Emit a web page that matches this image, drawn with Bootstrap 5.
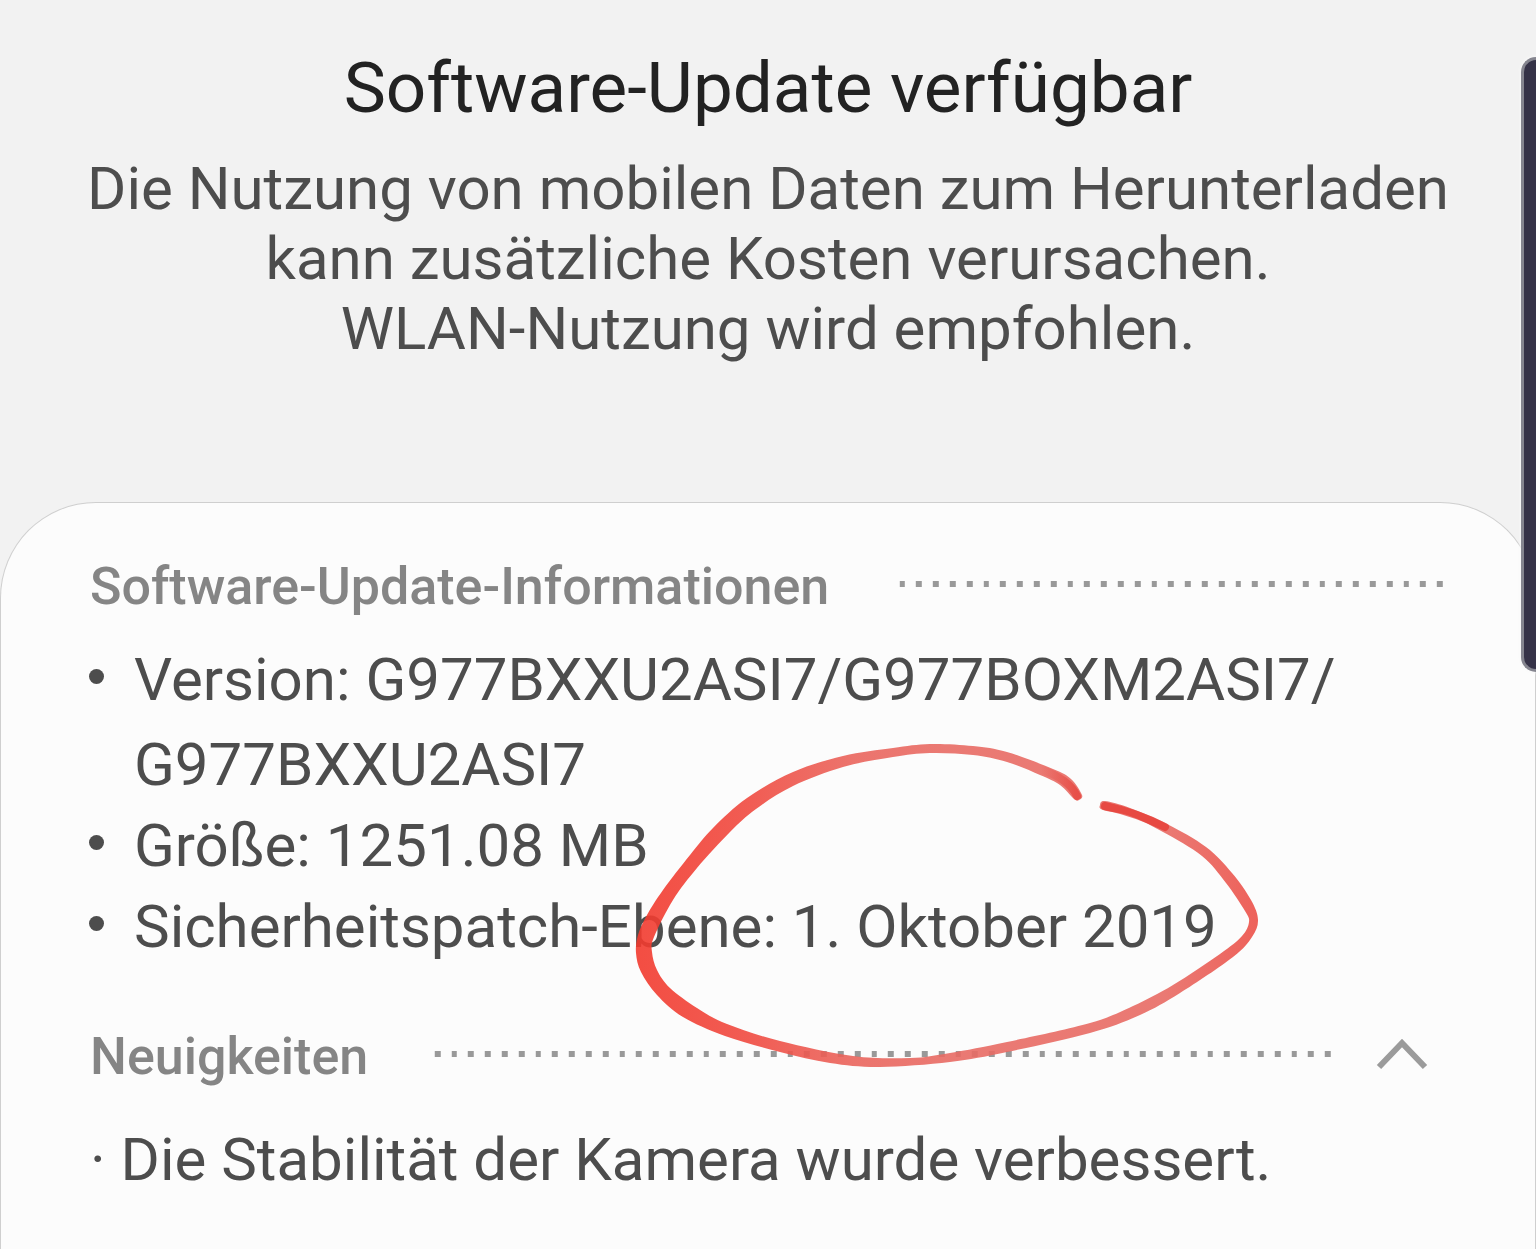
<!DOCTYPE html>
<html lang="de">
<head>
<meta charset="utf-8">
<meta name="viewport" content="width=device-width, initial-scale=1">
<title>Software-Update</title>
<link href="https://cdn.jsdelivr.net/npm/bootstrap@5.3.0/dist/css/bootstrap.min.css" rel="stylesheet">
<style>
  body { background: #f2f2f2; color: #4d4d4d; font-family: Roboto, "Liberation Sans", sans-serif; font-size: 60px; line-height: 70px; }
  .update-head { padding: 46px 80px 138px; }
  .update-title { color: #222; font-size: 71px; line-height: 84px; font-weight: 400; margin-bottom: 24px; }
  .info-sheet { background: #fcfcfc; border: 1px solid #cfcfcf; border-bottom: 0; border-radius: 96px 96px 0 0; padding: 54px 92px 0 89px; }
  .section-title { color: #858585; font-size: 52px; line-height: 60px; font-weight: 500; }
  .dotted-rule { height: 6px; margin: 0 0 6px 64px; background: repeating-linear-gradient(90deg, transparent 0 13%, #999 13% 20%) right top / 84px 6px repeat-x; }
  .info-list { margin: 20px 0 58px; line-height: 85px; }
  .info-list li { position: relative; padding-left: 44px; }
  .info-list li + li { margin-top: -4px; }
  .info-list li::before { content: ""; position: absolute; left: -1px; top: 32px; width: 15px; height: 15px; border-radius: 50%; background: #4d4d4d; }
  .collapse-btn { width: 52px; height: 60px; margin: 0 15px 0 45px; }
  .news-text { margin: 38px 0 60px; }
  .edge-handle { top: 57px; right: 0; width: 15px; height: 615px; background: #353247; border: 3px solid #85858f; border-right: 0; border-radius: 18px 0 0 18px; box-shadow: 0 0 3px 1px #f8f8f8; }
  .ink-circle { left: 629px; top: 237px; pointer-events: none; }
</style>
<script src="https://cdn.jsdelivr.net/npm/bootstrap@5.3.0/dist/js/bootstrap.bundle.min.js"></script>
</head>
<body class="position-relative min-vh-100 d-flex flex-column overflow-x-hidden">
<header class="update-head text-center">
  <h1 class="update-title">Software-Update verfügbar</h1>
  <p class="mb-0">Die Nutzung von mobilen Daten zum Herunterladen<br>kann zusätzliche Kosten verursachen.<br>WLAN-Nutzung wird empfohlen.</p>
</header>

<main class="info-sheet position-relative flex-grow-1">
  <div class="d-flex align-items-center">
    <h2 class="section-title mb-0">Software-Update-Informationen</h2>
    <div class="dotted-rule flex-grow-1"></div>
  </div>
  <ul class="info-list list-unstyled">
    <li>Version: G977BXXU2ASI7/G977BOXM2ASI7/<wbr>G977BXXU2ASI7</li>
    <li>Größe: 1251.08 MB</li>
    <li>Sicherheitspatch-Ebene: 1. Oktober 2019</li>
  </ul>
  <div class="d-flex align-items-center">
    <h2 class="section-title mb-0">Neuigkeiten</h2>
    <div class="dotted-rule flex-grow-1"></div>
    <button type="button" class="collapse-btn btn p-0 border-0 d-flex" aria-label="Neuigkeiten einklappen" data-bs-toggle="collapse" data-bs-target="#news" aria-expanded="true">
      <svg width="52" height="60" viewBox="0 0 52 60" fill="none" stroke="#9b9b9b" stroke-width="6"><path d="M3 40 26 16 49 40"/></svg>
    </button>
  </div>
  <div id="news" class="collapse show"><p class="news-text">· Die Stabilität der Kamera wurde verbessert.</p></div>

  <svg class="ink-circle position-absolute" width="640" height="340" viewBox="630 740 640 340" aria-hidden="true">
    <defs>
      <linearGradient id="ink" gradientUnits="userSpaceOnUse" x1="636" y1="0" x2="1258" y2="0">
        <stop offset="0" stop-color="#f23a2e"/><stop offset=".18" stop-color="#f04a40"/><stop offset=".35" stop-color="#ea655d"/><stop offset=".5" stop-color="#e86b64"/><stop offset=".85" stop-color="#e86b64"/><stop offset="1" stop-color="#ec5048"/>
      </linearGradient>
      <linearGradient id="inkEnd" gradientUnits="userSpaceOnUse" x1="1040" y1="0" x2="1076" y2="0">
        <stop offset="0" stop-color="#e5342d" stop-opacity="0"/><stop offset="1" stop-color="#e5342d"/>
      </linearGradient>
    </defs>
    <path id="stroke" fill="url(#ink)" opacity=".9"/>
    <path d="M1105 806Q1137 813 1165 827" fill="none" stroke="#e5342d" stroke-width="8" stroke-linecap="round" opacity=".7"/>
    <path d="M1040 769Q1069 779 1077 796" fill="none" stroke="url(#inkEnd)" stroke-width="8" stroke-linecap="round" opacity=".6"/>
  </svg>
</main>
<div class="edge-handle position-absolute"></div>

<script>
  // Outline of the pen stroke: outer edge, then back along the inner edge
  const pts = [[1082,795],[1071,779],[1053,769],[1007,752],[973,746],[930,744],[893,748],[843,756],[793,772],[747,798],[713,828],[690,855],[663,890],[647,915],[638,935],[636,953],[641,972],[657,995],[683,1017],[725,1036],[780,1052],[830,1063],[880,1067],[950,1062],[1007,1052],[1090,1033],[1140,1015],[1180,993],[1233,957],[1252,937],[1258,920],[1251,900],[1232,873],[1206,847],[1167,824],[1130,808],[1105,801],[1100,805],[1103,810],[1130,816],[1163,832],[1202,856],[1226,883],[1245,911],[1249,922],[1242,936],[1220,954],[1173,985],[1133,1006],[1090,1023],[1007,1042],[950,1053],[910,1058],[853,1056],[780,1041],[727,1024],[697,1008],[670,988],[657,970],[652,952],[654,937],[673,900],[697,868],[730,832],[756,809],[793,786],[843,767],[893,757],[930,753],[973,755],[1007,762],[1040,775],[1060,785],[1074,799],[1079,800]];
  const n = pts.length, at = i => pts[(i + n) % n];
  let d = "M" + at(0);
  for (let i = 0; i < n; i++) {
    const [a, b, c, e] = [at(i - 1), at(i), at(i + 1), at(i + 2)];
    d += "C" + [b[0] + (c[0] - a[0]) / 6, b[1] + (c[1] - a[1]) / 6, c[0] - (e[0] - b[0]) / 6, c[1] - (e[1] - b[1]) / 6, c[0], c[1]];
  }
  document.getElementById("stroke").setAttribute("d", d + "Z");
</script>
</body>
</html>
